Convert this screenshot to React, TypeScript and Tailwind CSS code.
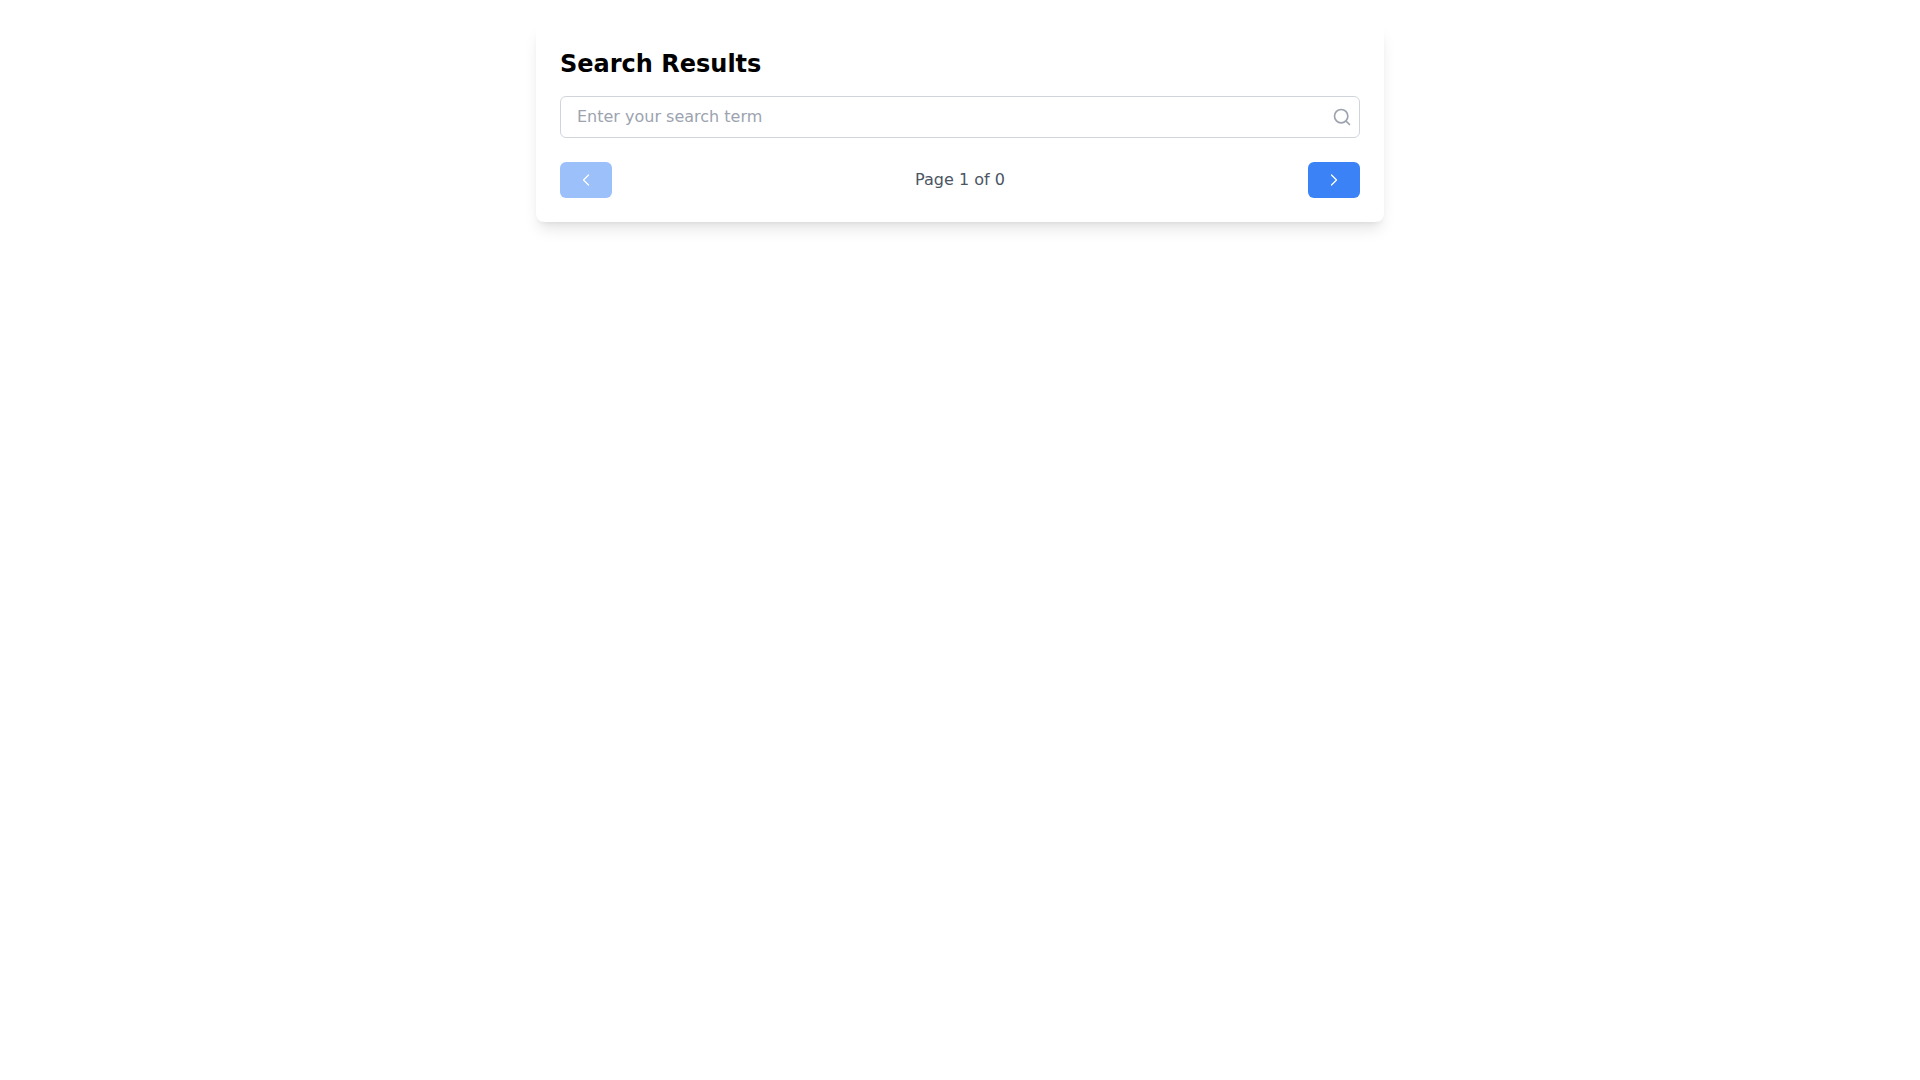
import { useState } from 'react';
import { ChevronLeft, ChevronRight, Search } from 'lucide-react';

export default function App() {
  const [term, setTerm] = useState('');
  const [page, setPage] = useState(1);
  const totalPages = 0;

  return (
    <div className="min-h-screen bg-white py-6 font-['DejaVu_Sans',sans-serif]">
      <main className="max-w-212 mx-auto p-6 bg-white rounded-lg shadow-lg">
        <h1 className="text-2xl font-bold mb-4 text-black">Search Results</h1>

        <div className="relative mb-6">
          <input
            type="text"
            aria-label="Search term"
            placeholder="Enter your search term"
            value={term}
            onChange={(e) => setTerm(e.target.value)}
            className="block w-full px-4 py-2 border border-[#d1d5db] rounded-md placeholder:text-[#9ca3af] focus:outline-none focus:ring-2 focus:ring-blue-500"
          />
          <div className="absolute inset-y-0 right-2 flex items-center pointer-events-none">
            <Search className="w-5 h-5 text-[#9ca3af]" />
          </div>
        </div>

        <div className="flex items-center justify-between">
          <button
            type="button"
            aria-label="Previous page"
            disabled={page === 1}
            onClick={() => setPage(page - 1)}
            className="px-4 py-2 bg-[#3b82f6] text-white rounded-md disabled:opacity-50"
          >
            <ChevronLeft className="w-5 h-5" strokeWidth={1.5} />
          </button>
          <span className="text-[#4b5563]">
            Page {page} of {totalPages}
          </span>
          <button
            type="button"
            aria-label="Next page"
            disabled={page === totalPages}
            onClick={() => setPage(page + 1)}
            className="px-4 py-2 bg-[#3b82f6] text-white rounded-md disabled:opacity-50"
          >
            <ChevronRight className="w-5 h-5" strokeWidth={1.5} />
          </button>
        </div>
      </main>
    </div>
  );
}
